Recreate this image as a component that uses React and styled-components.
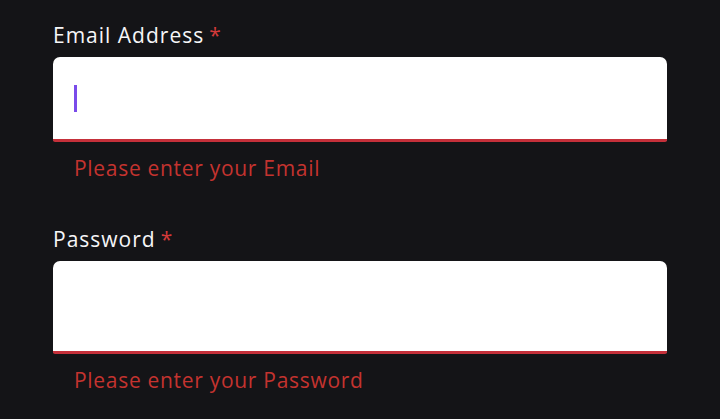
import React from "react";
import styled, { createGlobalStyle } from "styled-components";

const Global = createGlobalStyle`
  html, body {
    margin: 0;
    padding: 0;
    background: #141417;
  }
  body {
    font-family: "Open Sans", "Liberation Sans", sans-serif;
    overflow: hidden;
  }
`;

const Form = styled.div`
  width: 614px;
  padding: 20px 0 0 53px;
  display: flex;
  flex-direction: column;
`;

const Field = styled.div`
  display: flex;
  flex-direction: column;
  margin-bottom: ${(p) => p.gap || 0}px;
`;

const Label = styled.label`
  color: #f6f6f8;
  font-size: 21px;
  font-weight: 500;
  letter-spacing: 1px;
  line-height: 30px;
  height: 30px;
  margin-bottom: 7px;
`;

const Star = styled.span`
  color: #d43a3a;
  margin-left: 5px;
`;

const InputBox = styled.div`
  position: relative;
  height: ${(p) => p.h}px;
  background: #ffffff;
  border-radius: 7px 7px 2px 2px;
  border-bottom: 3px solid #c5303a;
  box-sizing: border-box;
  display: flex;
  align-items: center;
  padding-left: 21px;
`;

const Caret = styled.span`
  width: 3px;
  height: 27px;
  background: #7a4bea;
`;

const Error = styled.div`
  color: #c4332f;
  font-size: 21px;
  letter-spacing: 0.7px;
  line-height: 30px;
  padding: 11px 0 0 21px;
`;

export default function App() {
  return (
    <>
      <Global />
      <Form>
        <Field gap={41}>
          <Label>
            Email Address<Star>*</Star>
          </Label>
          <InputBox h={85}>
            <Caret />
          </InputBox>
          <Error>Please enter your Email</Error>
        </Field>
        <Field>
          <Label>
            Password<Star>*</Star>
          </Label>
          <InputBox h={93} />
          <Error>Please enter your Password</Error>
        </Field>
      </Form>
    </>
  );
}
